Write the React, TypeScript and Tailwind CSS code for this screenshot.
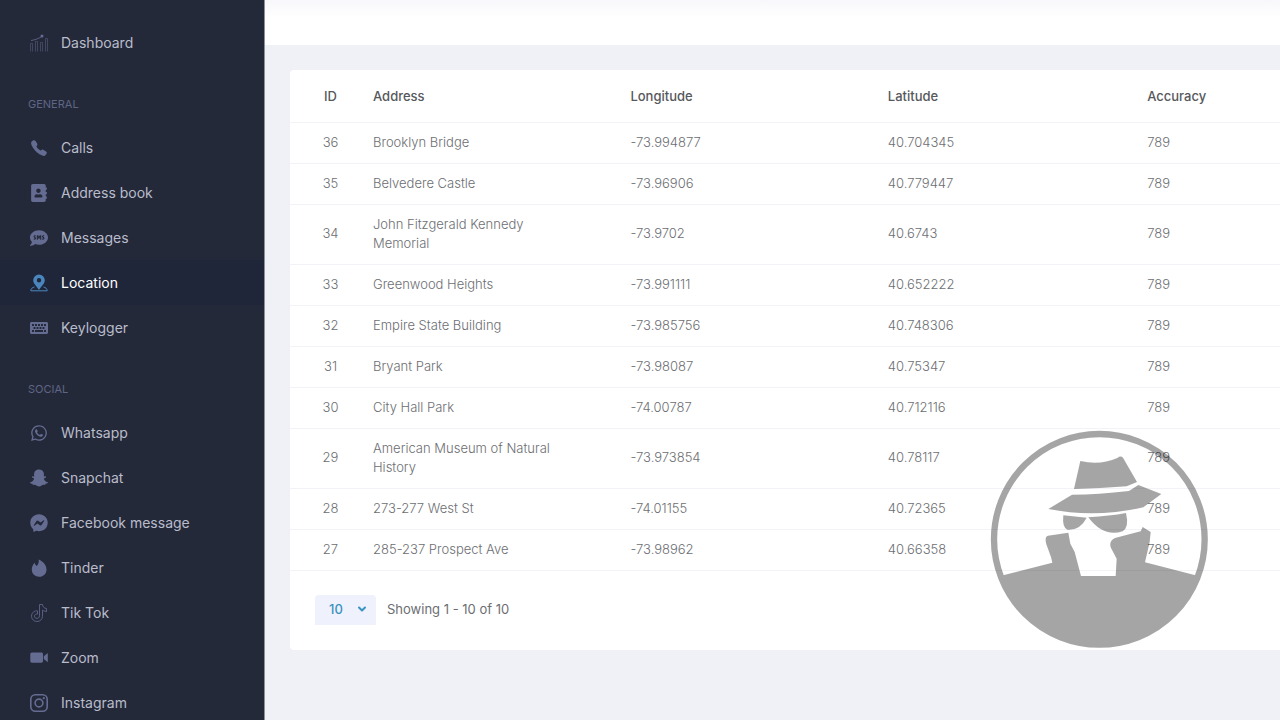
import React, { useState } from 'react';
import { ChevronDown } from 'lucide-react';
import {
  FaAddressBook,
  FaFacebookMessenger,
  FaKeyboard,
  FaSms,
  FaSnapchatGhost,
  FaWhatsapp,
} from 'react-icons/fa';
import { IoCall } from 'react-icons/io5';

type IconProps = { className?: string };

type NavItem = {
  name: string;
  href: string;
  icon: React.ComponentType<IconProps>;
};

function DashboardIcon({ className }: IconProps) {
  return (
    <svg viewBox="0 0 18 18" fill="none" stroke="currentColor" className={className} aria-hidden="true">
      <path d="M.5 17.500V9.500h2v8M5.500 17.500V7.500h2v10M10.500 17.500V8.500h2v9M15.500 17.500V4.500h2v13" opacity=".45" />
      <path d="M1 6.500c4-.5 7.500-2 11-4" opacity=".8" />
      <circle cx="12" cy="2" r="1.500" fill="currentColor" stroke="none" />
    </svg>
  );
}

function LocationIcon({ className }: IconProps) {
  return (
    <svg viewBox="0 0 18 18" fill="currentColor" className={className} aria-hidden="true">
      <path
        fillRule="evenodd"
        d="M9 .5a5.800 5.800 0 0 0-5.800 5.800C3.200 9.800 7 12.500 9 16c2-3.500 5.800-6.200 5.800-9.700A5.800 5.800 0 0 0 9 .5Zm0 3.500a2.200 2.200 0 1 1 0 4.400A2.200 2.200 0 0 1 9 4Z"
      />
      <path d="M4.500 13C2.500 13.500.8 14.500.8 16.800h16.400c0-2.300-1.700-3.300-3.700-3.800" fill="none" stroke="currentColor" />
    </svg>
  );
}

function TinderIcon({ className }: IconProps) {
  return (
    <svg viewBox="0 0 18 18" fill="currentColor" className={className} aria-hidden="true">
      <path d="M8.700.4c4.200 1.900 7.800 5.500 7.800 10 0 4.200-3.200 7.300-7.300 7.300s-7.400-2.900-7.400-7.200c0-2.800 1.200-5.200 3-6.800.2 1.300.7 2.500 1.700 3.200C8.500 5.500 9 3 8.700.4Z" />
    </svg>
  );
}

function TikTokIcon({ className }: IconProps) {
  return (
    <svg viewBox="0 0 18 18" fill="none" stroke="currentColor" strokeWidth=".8" className={className} aria-hidden="true">
      <path d="M9.500.5h3c.2 2.300 1.600 3.800 4 4v3c-1.500 0-2.900-.5-4-1.300v6c0 3.200-2.500 5.300-5.500 5.300s-5.500-2.200-5.500-5.300c0-3.300 2.800-5.800 6-5.300v3.200c-1.600-.5-3 .6-3 2.100 0 1.300 1 2.200 2.400 2.200s2.600-1 2.600-2.500V.5Z" />
    </svg>
  );
}

function ZoomIcon({ className }: IconProps) {
  return (
    <svg viewBox="0 0 18 18" fill="currentColor" className={className} aria-hidden="true">
      <path d="M.3 5.200C.3 4.100 1 3.400 2 3.400h9.300c1 0 1.700.7 1.700 1.700v7c0 1-.7 1.700-1.700 1.700H2c-1 0-1.700-.7-1.700-1.700Z" />
      <path d="M13.800 7.200 17.800 4v9.200l-4-3.200Z" />
    </svg>
  );
}

function InstagramIcon({ className }: IconProps) {
  return (
    <svg viewBox="0 0 18 18" fill="none" stroke="currentColor" strokeWidth="1.600" className={className} aria-hidden="true">
      <rect x=".8" y=".8" width="16.400" height="16.400" rx="4.500" />
      <circle cx="9" cy="9" r="3.900" />
      <circle cx="13.800" cy="4.200" r="1.100" fill="currentColor" stroke="none" />
    </svg>
  );
}

const dashboard: NavItem = { name: 'Dashboard', href: '#dashboard', icon: DashboardIcon };

const navSections: { title: string; items: NavItem[] }[] = [
  {
    title: 'General',
    items: [
      { name: 'Calls', href: '#calls', icon: IoCall },
      { name: 'Address book', href: '#address-book', icon: FaAddressBook },
      { name: 'Messages', href: '#messages', icon: FaSms },
      { name: 'Location', href: '#location', icon: LocationIcon },
      { name: 'Keylogger', href: '#keylogger', icon: FaKeyboard },
    ],
  },
  {
    title: 'Social',
    items: [
      { name: 'Whatsapp', href: '#whatsapp', icon: FaWhatsapp },
      { name: 'Snapchat', href: '#snapchat', icon: FaSnapchatGhost },
      { name: 'Facebook message', href: '#facebook', icon: FaFacebookMessenger },
      { name: 'Tinder', href: '#tinder', icon: TinderIcon },
      { name: 'Tik Tok', href: '#tiktok', icon: TikTokIcon },
      { name: 'Zoom', href: '#zoom', icon: ZoomIcon },
      { name: 'Instagram', href: '#instagram', icon: InstagramIcon },
    ],
  },
];

const locations = [
  { id: 36, address: 'Brooklyn Bridge', longitude: '-73.994877', latitude: '40.704345', accuracy: 789 },
  { id: 35, address: 'Belvedere Castle', longitude: '-73.96906', latitude: '40.779447', accuracy: 789 },
  { id: 34, address: 'John Fitzgerald Kennedy Memorial', longitude: '-73.9702', latitude: '40.6743', accuracy: 789 },
  { id: 33, address: 'Greenwood Heights', longitude: '-73.991111', latitude: '40.652222', accuracy: 789 },
  { id: 32, address: 'Empire State Building', longitude: '-73.985756', latitude: '40.748306', accuracy: 789 },
  { id: 31, address: 'Bryant Park', longitude: '-73.98087', latitude: '40.75347', accuracy: 789 },
  { id: 30, address: 'City Hall Park', longitude: '-74.00787', latitude: '40.712116', accuracy: 789 },
  { id: 29, address: 'American Museum of Natural History', longitude: '-73.973854', latitude: '40.78117', accuracy: 789 },
  { id: 28, address: '273-277 West St', longitude: '-74.01155', latitude: '40.72365', accuracy: 789 },
  { id: 27, address: '285-237 Prospect Ave', longitude: '-73.98962', latitude: '40.66358', accuracy: 789 },
];

function NavLink({ item, active }: { item: NavItem; active: boolean }) {
  const Icon = item.icon;
  return (
    <a
      href={item.href}
      aria-current={active ? 'page' : undefined}
      className={`flex h-[45px] items-center gap-[13px] pl-[30px] text-sm ${
        active ? 'bg-[#1f263a] text-white' : 'text-[#b9bccb] hover:text-white'
      }`}
    >
      <Icon className={`size-[18px] shrink-0 ${active ? 'text-[#4a86bd]' : 'text-[#656c92]'}`} />
      {item.name}
    </a>
  );
}

function Sidebar() {
  return (
    <nav className="w-[265px] shrink-0 border-r border-[#8d909b] bg-[#242939] pt-5">
      <NavLink item={dashboard} active={false} />
      {navSections.map((section) => (
        <section key={section.title}>
          <h2 className="pt-[30px] pb-3 pl-7 text-[11px] leading-[18px] text-[#5f6586] uppercase">
            {section.title}
          </h2>
          {section.items.map((item) => (
            <NavLink key={item.name} item={item} active={item.name === 'Location'} />
          ))}
        </section>
      ))}
    </nav>
  );
}

function LocationTable() {
  return (
    <table className="w-full table-fixed text-left text-[13px] leading-[19px]">
      <colgroup>
        <col className="w-[73px]" />
        <col className="w-[26%]" />
        <col className="w-[26%]" />
        <col className="w-[26%]" />
        <col />
      </colgroup>
      <thead>
        <tr className="h-[52px] border-b border-[#f2f3f6] text-[#56585c]">
          <th className="pt-0.5 pl-2 text-center font-medium">ID</th>
          <th className="px-2.5 pt-0.5 font-medium">Address</th>
          <th className="px-2.5 pt-0.5 font-medium">Longitude</th>
          <th className="px-2.5 pt-0.5 font-medium">Latitude</th>
          <th className="px-3 pt-0.5 font-medium">Accuracy</th>
        </tr>
      </thead>
      <tbody className="font-light text-[#6c6e72]">
        {locations.map((row) => (
          <tr key={row.id} className="border-b border-[#f2f3f6]">
            <td className="pt-2.5 pb-[11px] pl-2 text-center">{row.id}</td>
            <td className="pt-2.5 pr-10 pb-[11px] pl-2.5">{row.address}</td>
            <td className="px-2.5 pt-2.5 pb-[11px]">{row.longitude}</td>
            <td className="px-2.5 pt-2.5 pb-[11px]">{row.latitude}</td>
            <td className="px-3 pt-2.5 pb-[11px]">{row.accuracy}</td>
          </tr>
        ))}
      </tbody>
    </table>
  );
}

function TableFooter() {
  const [pageSize, setPageSize] = useState('10');

  return (
    <div className="flex items-center gap-[11px] px-[25px] pt-6 pb-[25px] text-[13px]">
      <div className="relative">
        <select
          aria-label="Rows per page"
          value={pageSize}
          onChange={(e) => setPageSize(e.target.value)}
          className="h-[30px] w-[61px] appearance-none rounded-t bg-[#eff1fd] pl-3.5 font-medium text-[#3b93c0]"
        >
          <option>10</option>
          <option>20</option>
          <option>50</option>
        </select>
        <ChevronDown
          strokeWidth={4}
          className="pointer-events-none absolute top-2 right-2 size-3 text-[#3b93c0]"
        />
      </div>
      <p className="text-[#6c6e72]">Showing 1 - 10 of 10</p>
    </div>
  );
}

/* Spy badge laid over the lower right of the card */
function SpyBadge() {
  return (
    <svg
      viewBox="0 0 720 720"
      className="pointer-events-none absolute right-[60px] -bottom-2.5 size-60"
      opacity=".35"
      aria-hidden="true"
    >
      <circle cx="358" cy="358" r="316" fill="none" stroke="#000" strokeWidth="19" />
      <path d="M61 468 217 428 213 411 199 373Q193 350 204 347L265 338 271 371 284 396 303 468H407L410 416 393 384Q385 364 405 354L482 334 488 321 512 336 509 366 495 427 655 468A316 316 0 0 1 61 468Z" />
      <path d="M301 123Q360 137 412 114Q422 106 429 113L471 186 440 199Q360 205 282 207Z" />
      <path d="M276 224Q355 224 447 213L475 195 544 222 490 262Q345 295 205 267Z" />
      <path d="M250 286 320 293Q300 332 262 329 246 322 250 286Z" />
      <path d="M325 292Q390 288 438 279 448 322 428 334 370 353 325 292Z" />
    </svg>
  );
}

export default function App() {
  return (
    <div className="flex h-screen overflow-hidden bg-[#eff1f6] font-['Inter','Noto_Sans',sans-serif]">
      <Sidebar />
      <main className="min-w-0 flex-1">
        <header className="h-[45px] bg-white bg-linear-to-b from-[#f8f8fc] to-white to-40%" />
        <div className="pt-[25px] pl-[25px]">
          <div className="relative rounded-l bg-white">
            <LocationTable />
            <TableFooter />
            <SpyBadge />
          </div>
        </div>
      </main>
    </div>
  );
}
